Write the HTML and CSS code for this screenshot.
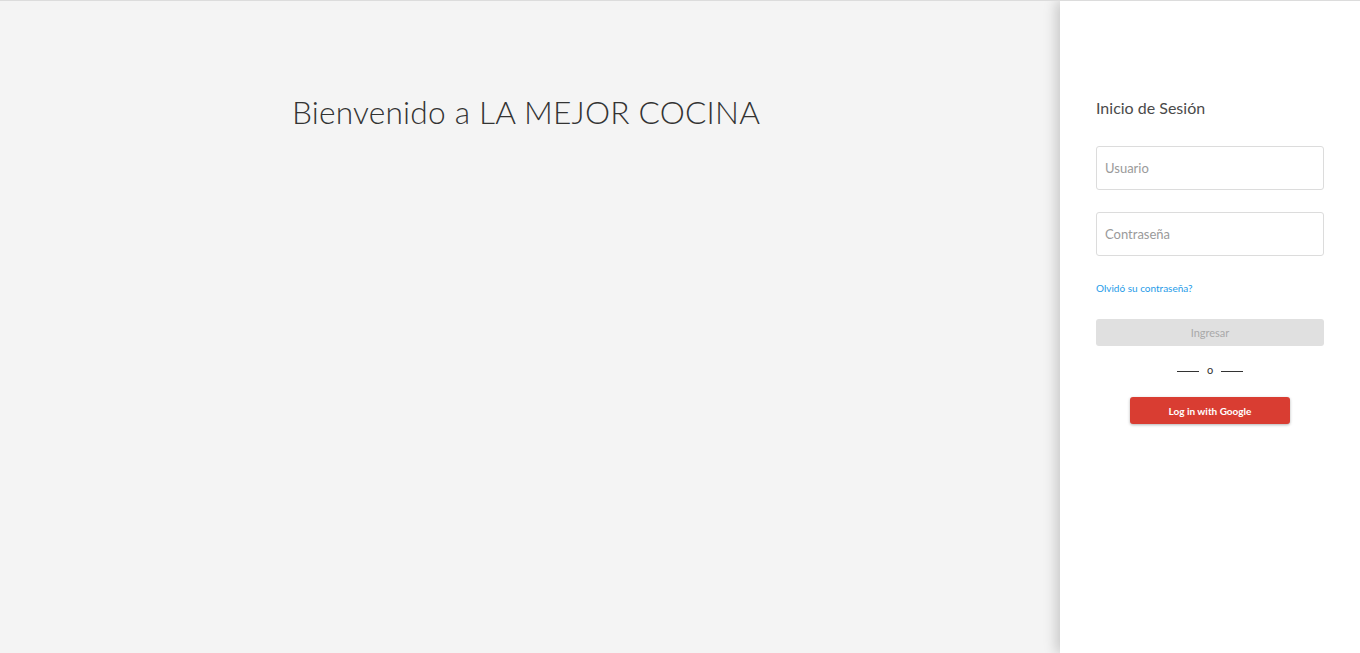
FILE: index.html
```html
<!DOCTYPE html>
<html lang="es">
<head>
<meta charset="utf-8">
<title>LA MEJOR COCINA</title>
<link rel="stylesheet" href="styles.css">
</head>
<body>
<div class="page">
  <main class="welcome">
    <h1 class="welcome-title">Bienvenido a LA MEJOR COCINA</h1>
  </main>
  <aside class="login">
    <h2 class="login-title">Inicio de Sesión</h2>
    <div class="field"><input class="input" type="text" placeholder="Usuario"></div>
    <div class="field"><input class="input" type="password" placeholder="Contraseña"></div>
    <a class="forgot" href="#">Olvidó su contraseña?</a>
    <button class="btn-submit" disabled>Ingresar</button>
    <div class="divider"><span class="line"></span><span class="or">o</span><span class="line"></span></div>
    <div class="google-row"><button class="btn-google">Log in with Google</button></div>
  </aside>
</div>
</body>
</html>
```
FILE: styles.css
```css
* { box-sizing: border-box; }
html, body { margin: 0; padding: 0; height: 100%; }
body {
  font-family: Lato, "Noto Sans", sans-serif;
  background: #f4f4f4;
  border-top: 1px solid #dcdcdc;
}
.page {
  display: flex;
  height: 652px;
}
.welcome {
  flex: 1;
  display: flex;
  justify-content: center;
  align-items: flex-start;
  padding-right: 8px;
}
.welcome-title {
  margin: 92px 0 0 0;
  font-weight: 300;
  font-size: 31.7px;
  color: #333;
  letter-spacing: 0.2px;
}
.login {
  width: 300px;
  background: #fff;
  box-shadow: -4px 0 12px rgba(0,0,0,0.18);
  padding: 96px 36px 0 36px;
  display: flex;
  flex-direction: column;
}
.login-title {
  margin: 0;
  font-weight: 400;
  font-size: 16px;
  color: #4a4a4a;
  line-height: 22px;
}
.field { margin-top: 27px; }
.field + .field { margin-top: 22px; }
.input {
  width: 100%;
  height: 44px;
  border: 1px solid #dcdcdc;
  border-radius: 3px;
  padding: 0 8px;
  font-family: Lato, "Noto Sans", sans-serif;
  font-size: 13px;
  color: #333;
  outline: none;
}
.input::placeholder { color: #9a9a9a; }
.forgot {
  margin-top: 25px;
  font-size: 10px;
  color: #1e9be8;
  text-decoration: none;
  line-height: 14px;
}
.btn-submit {
  margin-top: 24px;
  height: 27px;
  border: none;
  border-radius: 3px;
  background: #e0e0e0;
  color: #a9a9a9;
  font-family: Lato, "Noto Sans", sans-serif;
  font-size: 11px;
}
.divider {
  margin-top: 18px;
  display: flex;
  justify-content: center;
  align-items: center;
  gap: 8px;
  height: 14px;
}
.line { width: 22px; height: 1px; background: #333; }
.or { font-size: 11px; color: #333; line-height: 10px; padding-bottom: 2px; }
.google-row {
  margin-top: 19px;
  display: flex;
  justify-content: center;
}
.btn-google {
  width: 160px;
  height: 27px;
  border: none;
  border-radius: 3px;
  background: #d93d32;
  color: #fff;
  font-family: Lato, "Noto Sans", sans-serif;
  font-weight: 700;
  font-size: 10px;
  box-shadow: 0 1px 3px rgba(0,0,0,0.3);
}
```
